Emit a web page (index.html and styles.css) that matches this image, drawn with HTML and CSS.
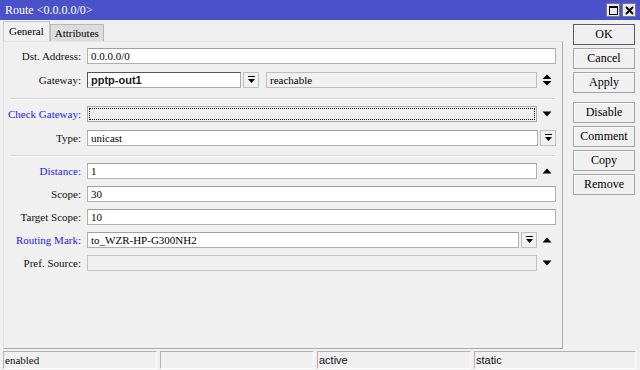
FILE: index.html
```html
<!DOCTYPE html>
<html lang="en">
<head>
    <meta charset="UTF-8">
    <title>Route &lt;0.0.0.0/0&gt;</title>
    <link rel="stylesheet" href="styles.css">
</head>
<body>
    <div class="window">
        <div class="titlebar">
            <span class="title">Route &lt;0.0.0.0/0&gt;</span>
            <div class="win-buttons">
                <span class="win-btn"><svg width="9" height="9" viewBox="0 0 9 9"><rect x="0.5" y="0.5" width="8" height="8" fill="none" stroke="#000"/><rect x="0" y="0" width="9" height="2" fill="#000"/></svg></span>
                <span class="win-btn"><svg width="9" height="9" viewBox="0 0 9 9"><path d="M1 1 L8 8 M8 1 L1 8" stroke="#000" stroke-width="1.8"/></svg></span>
            </div>
        </div>

        <div class="main">
            <div class="left">
                <div class="tabs">
                    <div class="tab active">General</div>
                    <div class="tab">Attributes</div>
                </div>
                <div class="panel">
                    <div class="group">
                        <div class="row">
                            <label class="label">Dst. Address:</label>
                            <div class="field"><div class="input">0.0.0.0/0</div></div>
                        </div>
                        <div class="row">
                            <label class="label">Gateway:</label>
                            <div class="field">
                                <div class="input gw focus">pptp-out1</div>
                                <span class="drop-btn"><svg width="9" height="8" viewBox="0 0 9 8"><rect x="1" y="0" width="7" height="1" fill="#000"/><path d="M1 3 H8 L4.5 7 Z" fill="#000"/></svg></span>
                                <div class="input status">reachable</div>
                                <span class="arrow"><svg width="10" height="12" viewBox="0 0 10 12"><path d="M0.5 5 H9.5 L5 0.5 Z M0.5 7 H9.5 L5 11.5 Z" fill="#000"/></svg></span>
                            </div>
                        </div>
                    </div>

                    <div class="sep first"></div>

                    <div class="group">
                        <div class="row">
                            <label class="label blue">Check Gateway:</label>
                            <div class="field">
                                <div class="input checkgw"><span class="dots"></span></div>
                                <span class="arrow"><svg width="10" height="6" viewBox="0 0 10 6"><path d="M0.5 0.5 H9.5 L5 5.5 Z" fill="#000"/></svg></span>
                            </div>
                        </div>
                        <div class="row">
                            <label class="label">Type:</label>
                            <div class="field">
                                <div class="input">unicast</div>
                                <span class="drop-btn"><svg width="9" height="8" viewBox="0 0 9 8"><rect x="1" y="0" width="7" height="1" fill="#000"/><path d="M1 3 H8 L4.5 7 Z" fill="#000"/></svg></span>
                            </div>
                        </div>
                    </div>

                    <div class="sep"></div>

                    <div class="group tight">
                        <div class="row">
                            <label class="label blue">Distance:</label>
                            <div class="field">
                                <div class="input">1</div>
                                <span class="arrow"><svg width="10" height="6" viewBox="0 0 10 6"><path d="M0.5 5.5 H9.5 L5 0.5 Z" fill="#000"/></svg></span>
                            </div>
                        </div>
                        <div class="row">
                            <label class="label">Scope:</label>
                            <div class="field"><div class="input">30</div></div>
                        </div>
                        <div class="row">
                            <label class="label">Target Scope:</label>
                            <div class="field"><div class="input">10</div></div>
                        </div>
                        <div class="row">
                            <label class="label blue">Routing Mark:</label>
                            <div class="field">
                                <div class="input">to_WZR-HP-G300NH2</div>
                                <span class="drop-btn"><svg width="9" height="8" viewBox="0 0 9 8"><rect x="1" y="0" width="7" height="1" fill="#000"/><path d="M1 3 H8 L4.5 7 Z" fill="#000"/></svg></span>
                                <span class="arrow"><svg width="10" height="6" viewBox="0 0 10 6"><path d="M0.5 5.5 H9.5 L5 0.5 Z" fill="#000"/></svg></span>
                            </div>
                        </div>
                        <div class="row">
                            <label class="label">Pref. Source:</label>
                            <div class="field">
                                <div class="input disabled"></div>
                                <span class="arrow"><svg width="10" height="6" viewBox="0 0 10 6"><path d="M0.5 0.5 H9.5 L5 5.5 Z" fill="#000"/></svg></span>
                            </div>
                        </div>
                    </div>
                </div>
            </div>

            <div class="actions">
                <button class="btn default">OK</button>
                <button class="btn">Cancel</button>
                <button class="btn">Apply</button>
                <button class="btn spaced">Disable</button>
                <button class="btn">Comment</button>
                <button class="btn">Copy</button>
                <button class="btn">Remove</button>
            </div>
        </div>

        <div class="statusbar">
            <div class="cell serif">enabled</div>
            <div class="cell"></div>
            <div class="cell">active</div>
            <div class="cell">static</div>
        </div>
    </div>
</body>
</html>
```

FILE: styles.css
```css
* {
    margin: 0;
    padding: 0;
    box-sizing: border-box;
}

body {
    width: 640px;
    height: 370px;
    overflow: hidden;
    background: #f0f0f0;
    font-family: 'Liberation Serif', serif;
    font-size: 11px;
    color: #000;
}

.window {
    display: flex;
    flex-direction: column;
    height: 370px;
}

/* title bar */
.titlebar {
    height: 20px;
    background: #4b51c9;
    display: flex;
    align-items: center;
    justify-content: space-between;
    padding: 0 4px 0 5px;
    color: #fff;
}

.title {
    font-size: 12px;
}

.win-buttons {
    display: flex;
    gap: 2px;
}

.win-btn {
    width: 14px;
    height: 14px;
    background: #e8e8e8;
    border: 1px solid #7a7a7a;
    display: flex;
    align-items: center;
    justify-content: center;
}

/* main area */
.main {
    display: flex;
    flex: 1;
    gap: 10px;
}

.left {
    width: 563px;
    padding-left: 3px;
    display: flex;
    flex-direction: column;
}

.tabs {
    display: flex;
    align-items: flex-end;
    height: 21px;
    padding-top: 1px;
}

.tab {
    height: 17px;
    padding: 0 4px;
    background: #dcdcdc;
    border: 1px solid #b8b8b8;
    border-bottom: none;
    font-size: 11px;
    line-height: 16px;
}

.tab.active {
    height: 20px;
    background: #f0f0f0;
    line-height: 18px;
    padding: 0 5px;
    border-color: #c8c8c8;
}

.panel {
    height: 308px;
    border: 1px solid #a8a8a8;
    border-top-color: #e2e2e2;
    border-left-color: #e2e2e2;
    padding-top: 6px;
    display: flex;
    flex-direction: column;
}

.group {
    display: flex;
    flex-direction: column;
    gap: 8px;
}

.group.tight {
    gap: 7px;
}

.row {
    display: flex;
    align-items: center;
    height: 16px;
}

.label {
    width: 78px;
    text-align: right;
    padding-right: 1px;
    flex-shrink: 0;
    color: #111;
}

.label.blue {
    color: #2323e6;
}

.field {
    display: flex;
    align-items: center;
    margin-left: 5px;
    width: 469px;
    height: 16px;
}

.input {
    flex: 1;
    height: 16px;
    background: #fff;
    border: 1px solid #b0b0b0;
    border-top-color: #a0a0a0;
    padding: 0 3px;
    line-height: 14px;
    white-space: nowrap;
    overflow: hidden;
}

.input.gw {
    flex: 0 0 154px;
    font-family: 'Liberation Sans', sans-serif;
    font-weight: bold;
    font-size: 11px;
    color: #202020;
}

.input.focus {
    border: 1px solid #555;
    border-right-color: #aaa;
    border-bottom-color: #aaa;
}

.input.status {
    flex: 1;
    margin-left: 7px;
    background: #f0f0f0;
    border-color: #bdbdbd;
}

.input.checkgw {
    background: #efefef;
    border-color: #a8a8a8;
    padding: 1px;
}

.dots {
    display: block;
    height: 12px;
    border: 1px dotted #000;
}

.input.disabled {
    background: #f0f0f0;
    border-color: #c4c4c4;
}

.drop-btn {
    width: 16px;
    height: 16px;
    margin-left: 2px;
    background: #f0f0f0;
    border: 1px solid #c0c0c0;
    display: flex;
    align-items: center;
    justify-content: center;
    flex-shrink: 0;
}

.arrow {
    width: 19px;
    height: 16px;
    display: flex;
    align-items: center;
    justify-content: center;
    flex-shrink: 0;
}

.sep {
    height: 2px;
    margin: 9px 7px 6px 6px;
    border-top: 1px solid #d6d6d6;
    border-bottom: 1px solid #fafafa;
}

.sep.first {
    margin-top: 10px;
}

/* buttons on the right */
.actions {
    display: flex;
    flex-direction: column;
    gap: 3px;
    padding-top: 4px;
}

.btn {
    width: 62px;
    height: 21px;
    background: #f0f0f0;
    border: 1px solid #a4a4a4;
    box-shadow: inset 1px 1px 0 #fbfbfb;
    font-family: 'Liberation Serif', serif;
    font-size: 12px;
    color: #000;
}

.btn.default {
    border-color: #5a5a5a;
}

.btn.spaced {
    margin-top: 6px;
}

/* status bar */
.statusbar {
    height: 21px;
    display: flex;
    gap: 3px;
    padding: 2px 4px 1px 3px;
}

.cell {
    flex: 0 0 154px;
    border: 1px solid #fff;
    border-top-color: #b4b4b4;
    border-left-color: #b4b4b4;
    font-family: 'Liberation Sans', sans-serif;
    font-size: 11px;
    line-height: 16px;
    padding-left: 1px;
    color: #111;
}

.cell.serif {
    font-family: 'Liberation Serif', serif;
}

.cell:last-child {
    flex: 1;
}
```
